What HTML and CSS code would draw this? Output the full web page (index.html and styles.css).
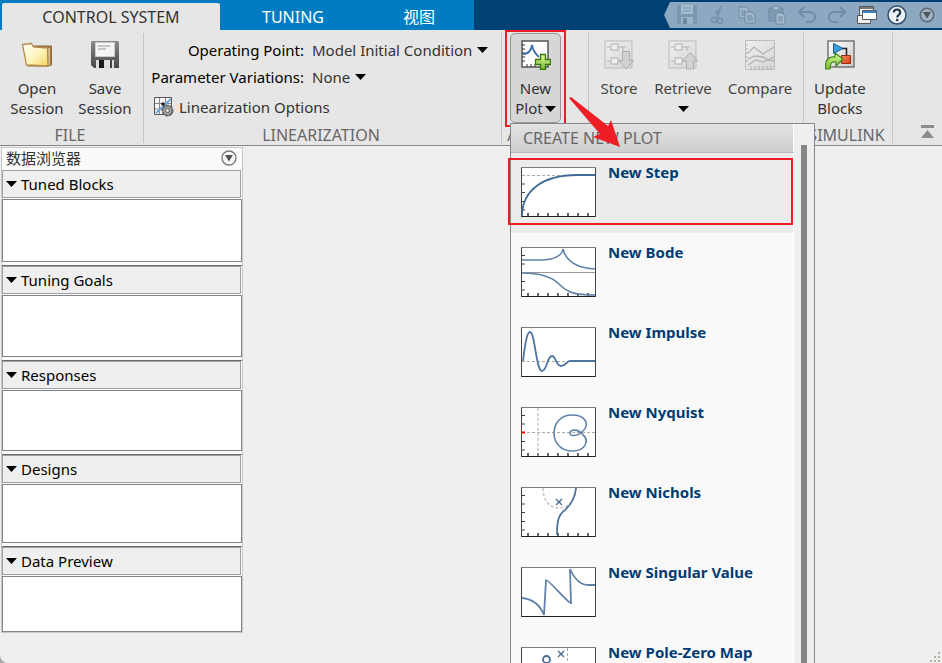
FILE: index.html
```html
<!DOCTYPE html>
<html lang="en">
<head>
<meta charset="utf-8">
<title>Control System Tuner</title>
<link rel="stylesheet" href="styles.css">
</head>
<body>
<svg class="defs" width="0" height="0" aria-hidden="true">
  <defs>
    <linearGradient id="gFolder" x1="0" y1="0" x2="1" y2="1"><stop offset="0" stop-color="#fffef2"/><stop offset=".5" stop-color="#fff6c4"/><stop offset="1" stop-color="#f3d75c"/></linearGradient>
    <linearGradient id="gDisk" x1="0" y1="0" x2="0" y2="1"><stop offset="0" stop-color="#8a8a8a"/><stop offset="1" stop-color="#484848"/></linearGradient>
    <linearGradient id="gGreen" x1="0" y1="0" x2="0" y2="1"><stop offset="0" stop-color="#e0f7a0"/><stop offset="1" stop-color="#78bd30"/></linearGradient>
    <linearGradient id="gBox" x1="0" y1="0" x2="1" y2="1"><stop offset="0" stop-color="#ffffff"/><stop offset="1" stop-color="#c9c9c9"/></linearGradient>
    <linearGradient id="gPale" x1="0" y1="0" x2="1" y2="1"><stop offset="0" stop-color="#efefef"/><stop offset="1" stop-color="#d6d6d6"/></linearGradient>
    <linearGradient id="gRed" x1="0" y1="0" x2="1" y2="1"><stop offset="0" stop-color="#f58a5c"/><stop offset="1" stop-color="#d63d10"/></linearGradient>
    <g id="ticksX"><path d="M7 46v3M17 46v3M27 46v3M37 46v3M47 46v3M57 46v3M67 46v3" stroke="#333" stroke-width="1.500" fill="none"/></g>
    <g id="ticksY"><path d="M1 8.500h3M1 17h3M1 25.500h3M1 34.500h3M1 43h3" stroke="#444" stroke-width="1.200" fill="none"/></g>
    <g id="frame"><rect x=".5" y=".5" width="74" height="49" fill="#fff" stroke="#7d7d7d"/><path d="M0 49.500h75" stroke="#222"/><path d="M.5 1v49M74.500 1v49" stroke="#444"/></g>
    <g id="blocks" fill="none"><rect x="1" y="1" width="27" height="27" fill="url(#gPale)" stroke="#bcbcbc"/><path d="M3 7h3M15 7h7M3 21h3M15 21h7M19 7v4" stroke="#b0b0b0"/><rect x="7" y="4" width="7" height="6" fill="#ededed" stroke="#b0b0b0"/><rect x="7" y="18" width="7" height="6" fill="#ededed" stroke="#b0b0b0"/></g>
    <g id="caret"><path d="M0 0h11L5.500 6z" fill="#000"/></g>
  </defs>
</svg>

<div class="app">
  <header class="titlebar">
    <nav class="tabs">
      <a class="tab active" href="#control">CONTROL SYSTEM</a>
      <a class="tab tuning" href="#tuning">TUNING</a>
      <a class="tab view" href="#view" lang="zh">视图</a>
    </nav>
    <div class="quick">
      <button type="button" aria-label="Save" disabled><svg width="22" height="22" viewBox="0 0 22 22" opacity=".55"><path d="M1 1h20v19H1z" fill="#6f8aa3"/><path d="M5 1h12v9H5z" fill="#b7cbdd"/><path d="M7 4h8M7 7h8" stroke="#6f8aa3"/><path d="M5 13h12v7H5z" fill="#a9bfd2"/><path d="M7 14h4v6H7z" fill="#526f8b"/></svg></button>
      <button type="button" aria-label="Cut" disabled><svg width="14" height="20" viewBox="0 0 14 20" fill="none" stroke="#7590a8" stroke-width="1.500"><path d="M11 1 7 12M6 5l3 9" stroke-width="2"/><circle cx="4" cy="15" r="2.500"/><circle cx="10" cy="16" r="2.500"/></svg></button>
      <button type="button" aria-label="Copy" disabled><svg width="18" height="20" viewBox="0 0 18 20" fill="#9fb8cc" stroke="#7089a2"><path d="M1 2h7l3 3v8H1z"/><path d="M3 6h5M3 8h5M3 10h5"/><path d="M7 7h7l3 3v8H7z"/><path d="M9 11h5M9 13h6M9 15h6"/></svg></button>
      <button type="button" aria-label="Paste" disabled><svg width="18" height="20" viewBox="0 0 18 20" fill="#7f9bb3" stroke="#7089a2"><path d="M1 3h14v13H1z"/><path d="M5 1h6v4H5z" fill="#a5bccf"/><path d="M8 8h6l3 3v8H8z" fill="#a5bccf"/><path d="M10 12h5M10 14h5M10 16h5"/></svg></button>
      <button type="button" aria-label="Undo" disabled><svg width="20" height="18" viewBox="0 0 20 18" fill="none" stroke="#718ca5" stroke-width="2"><path d="M7 1 2 6l5 5M2 6h11a5 5 0 0 1 0 10H9"/></svg></button>
      <button type="button" aria-label="Redo" disabled><svg width="20" height="18" viewBox="0 0 20 18" fill="none" stroke="#718ca5" stroke-width="2"><path d="m13 1 5 5-5 5M18 6H7a5 5 0 0 0 0 10h4"/></svg></button>
      <button type="button" aria-label="Switch windows"><svg width="20" height="20" viewBox="0 0 20 20"><path d="M2.500 1.500h14v10h-14z" fill="#f3f3f3" stroke="#555"/><path d="M3 2h13v2H3z" fill="#777"/><path d="M.5 10.500h13v8H.5z" fill="#eee" stroke="#555"/><path d="M5.500 5.500h14v9h-14z" fill="#fff" stroke="#4d5b68"/><path d="M6 6h13v2H6z" fill="#3f83c4"/></svg></button>
      <button type="button" aria-label="Help"><svg width="20" height="20" viewBox="0 0 20 20"><circle cx="10" cy="10" r="9" fill="#eef2f6" stroke="#34506d" stroke-width="1.500"/><path d="M6.800 7.500c0-4 6.400-4 6.400 0 0 2.400-3 2.400-3 5" fill="none" stroke="#26384b" stroke-width="2.200"/><circle cx="10.200" cy="15" r="1.300" fill="#26384b"/></svg></button>
      <button type="button" aria-label="Toolbar options"><svg width="16" height="16" viewBox="0 0 16 16"><circle cx="8" cy="8" r="6.800" fill="#9db2c4" stroke="#5d6872" stroke-width="1.500"/><path d="M4 5h8l-4 6.500z" fill="#4c545c"/></svg></button>
    </div>
  </header>

  <section class="ribbon">
    <div class="group file">
      <div class="tools">
        <button type="button" class="tool"><span class="pic"><svg width="30" height="26" viewBox="0 0 30 26"><path d="M10 4h19.500v19L26 24H6z" fill="#a87b42" stroke="#8d6a3c"/><path d="M27 6v17" stroke="#d6b98c" stroke-width="2"/><path d="M.5 2.500 9.500 1.500l2 3.500 14 1 .5 18-21.500-1z" fill="url(#gFolder)" stroke="#b58b4c" stroke-width="1.300"/></svg></span>Open<br>Session</button>
        <button type="button" class="tool"><span class="pic"><svg width="28" height="28" viewBox="0 0 28 28"><path d="M1 0h26l1 1v26H3l-3-3V1z" fill="url(#gDisk)"/><path d="M4.500 1.500h19v14h-19z" fill="#f4f4f4" stroke="#ccc"/><path d="M7 5h12M7 8h8" stroke="#999"/><path d="M5 19h18v9H5z" fill="#ddd"/><path d="M8 19h5v8H8z" fill="#1b1b1b"/><path d="M20 19v8" stroke="#444" stroke-width="2"/></svg></span>Save<br>Session</button>
      </div>
      <h2>FILE</h2>
    </div>

    <div class="group linear">
      <div class="fields">
        <label for="op">Operating Point:</label>
        <span class="drop"><select id="op"><option>Model Initial Condition</option></select><svg width="11" height="6"><use href="#caret"/></svg></span>
        <label for="pv">Parameter Variations:</label>
        <span class="drop"><select id="pv"><option>None</option></select><svg width="11" height="6"><use href="#caret"/></svg></span>
        <button type="button" class="options"><svg width="20" height="20" viewBox="0 0 20 20"><path d="M.5.500h17v17H.5z" fill="#f5f5f5" stroke="#555"/><path d="M1 6.500h16M1 12h16M5.500 1v16M11.500 1v16" stroke="#888"/><path d="M2 16 17 2" stroke="#6ba6d8" stroke-width="2"/><circle cx="9" cy="7" r="1.800" fill="#222"/><circle cx="13.500" cy="13.500" r="5" fill="#aaa" stroke="#666" stroke-width="2" stroke-dasharray="3 .6"/><circle cx="13.500" cy="13.500" r="2" fill="#eee" stroke="#555"/></svg>Linearization Options</button>
      </div>
      <h2>LINEARIZATION</h2>
    </div>

    <div class="group analysis">
      <div class="tools">
        <button type="button" class="tool open" aria-expanded="true"><span class="pic"><svg width="30" height="30" viewBox="0 0 30 30"><path d="M1 1h26v26H1z" fill="#fff" stroke="#555" stroke-width="1.500"/><path d="M1 5h3M1 9h3M1 13h3M1 17h3M1 21h3M6 27v-3M10 27v-3M14 27v-3" stroke="#333"/><path d="M2 14c5 0 8-3 9-9 1 7 4 9 7 12" fill="none" stroke="#3e6fa5" stroke-width="1.800"/><path d="M19.500 14.500h5v5h5v5h-5v5h-5v-5h-5v-5h5z" fill="url(#gGreen)" stroke="#34770f" stroke-width="1.300"/></svg></span>New<br>Plot<svg class="inline" width="11" height="6"><use href="#caret"/></svg></button>
      </div>
      <h2>ANALYSIS</h2>

      <div class="menu">
        <h3>CREATE NEW PLOT</h3>
        <div class="scroller">
          <ul>
            <li><a class="selected" href="#step"><svg width="75" height="50" fill="none"><use href="#frame"/><use href="#ticksX"/><use href="#ticksY"/><path d="M1 8.500h73" stroke="#aaa" stroke-dasharray="3 2"/><path d="M1 49C1 25 20 8 56 8h18" stroke="#416b98" stroke-width="1.800"/></svg><span>New Step</span></a></li>
            <li><a href="#bode"><svg width="75" height="50" fill="none"><use href="#frame"/><use href="#ticksX"/><use href="#ticksY"/><path d="M1 25.500h73" stroke="#999"/><path d="M1 13h19c12 0 21-4 22-11 3 12 13 19 32 20M1 26c16 0 29 3 37 11 9 9 16 11 36 11" stroke="#5f82a8" stroke-width="1.600"/></svg><span>New Bode</span></a></li>
            <li><a href="#impulse"><svg width="75" height="50" fill="none"><use href="#frame"/><path d="M1 34.500h73" stroke="#aaa" stroke-dasharray="3 2"/><path d="M2 34C4 17 6 5 9 5c5 0 6 39 12 39 5 0 5-15 10-15 4 0 4 10 9 10s5-5 9-5h25" stroke="#4f769f" stroke-width="1.800"/></svg><span>New Impulse</span></a></li>
            <li><a href="#nyquist"><svg width="75" height="50" fill="none"><use href="#frame"/><use href="#ticksX"/><use href="#ticksY"/><path d="M1 25.500h73M17 1v48" stroke="#aaa" stroke-dasharray="3 2"/><path d="M0 22.500v6M0 25.500h4" stroke="#f00" stroke-width="2"/><path d="M61 27c-2-4-12-6-12-1 0 4 8 3 12-1 9-8 3-17-10-17-11 0-18 8-18 18s7 18 18 18c14 0 18-11 10-17" stroke="#5f82a8" stroke-width="1.600"/></svg><span>New Nyquist</span></a></li>
            <li><a href="#nichols"><svg width="75" height="50" fill="none"><use href="#frame"/><use href="#ticksX"/><use href="#ticksY"/><path d="M22 1c0 14 8 20 16 20 10 0 17-8 17-20" stroke="#bbb" stroke-width="1.300" stroke-dasharray="3 2"/><path d="m35 12 6 6m0-6-6 6" stroke="#45698f" stroke-width="1.300"/><path d="M55 1c-1 10-4 16-11 22-7 5-8 12-8 25" stroke="#4f769f" stroke-width="1.800"/></svg><span>New Nichols</span></a></li>
            <li><a href="#singular"><svg width="75" height="50" fill="none"><use href="#frame"/><path d="M1 31c10 1 18 7 22 17l2-35c2-1 22 23 25 23l-1-34c5 11 11 16 18 16h7" stroke="#5f82a8" stroke-width="1.800"/></svg><span>New Singular Value</span></a></li>
            <li><a href="#polezero"><svg width="75" height="50" fill="none"><use href="#frame"/><path d="M46.500 1v48" stroke="#aaa" stroke-dasharray="3 2"/><circle cx="25.500" cy="12.500" r="3.500" stroke="#45698f" stroke-width="1.800"/><path d="m37 4 6 6m0-6-6 6" stroke="#45698f" stroke-width="1.300"/></svg><span>New Pole-Zero Map</span></a></li>
          </ul>
        </div>
        <div class="track"><div class="thumb"></div></div>
      </div>
      <svg class="arrow" width="52" height="52" viewBox="0 0 52 52" aria-hidden="true"><path d="M0 1 2 0 39 29l3-6 9 27-27-10 7-3z" fill="#ee1c25"/></svg>
    </div>

    <div class="group results">
      <div class="tools">
        <button type="button" class="tool store" disabled><span class="pic"><svg width="30" height="30" viewBox="0 0 30 30"><use href="#blocks"/><path d="M18.500 11.500h7v9h4l-7.500 8.500-7.500-8.500h4z" fill="#d2d2d2" stroke="#adadad"/></svg></span>Store</button>
        <button type="button" class="tool retrieve" disabled><span class="pic"><svg width="30" height="30" viewBox="0 0 30 30"><use href="#blocks"/><path d="M18.500 29v-8h-4L22 12.500l7.500 8.500h-4v8z" fill="#d2d2d2" stroke="#adadad"/></svg></span>Retrieve<br><svg class="inline" width="11" height="6"><use href="#caret"/></svg></button>
        <button type="button" class="tool compare" disabled><span class="pic"><svg width="30" height="30" viewBox="0 0 30 30" fill="none"><path d="M.5.500h29v29H.5z" fill="url(#gPale)" stroke="#bcbcbc"/><path d="M1 5h2M1 9h2M1 13h2M1 17h2M1 21h2M6 29v-3M10 29v-3M14 29v-3M18 29v-3M22 29v-3M26 29v-3" stroke="#aaa"/><path d="m3 13 6-6 9 7L29 7M3 19l7-3 8 1 5 3 6 1M3 25l8-5 7 2 11-5" stroke="#b2b2b2" stroke-width="1.300"/></svg></span>Compare</button>
      </div>
    </div>

    <div class="group simulink">
      <div class="tools">
        <button type="button" class="tool"><span class="pic"><svg width="30" height="30" viewBox="0 0 30 30"><path d="M3 1h26v26H3z" fill="url(#gBox)" stroke="#777" stroke-width="1.500"/><path d="M17 8.500h4.500V16" fill="none" stroke="#222" stroke-width="1.500"/><path d="M8.500 3.500 18 8.500l-9.500 5z" fill="#36a0de" stroke="#145e94"/><path d="M16.500 15.500h9v8h-9z" fill="url(#gRed)" stroke="#8f2c0d"/><path d="M.7 29C-.5 20 4 16 10 17v-4l8 6-7 7v-4c-5-1-6 2-6 7z" fill="url(#gGreen)" stroke="#3d8417" stroke-width="1.200"/></svg></span>Update<br>Blocks</button>
      </div>
      <h2>SIMULINK</h2>
    </div>
    <button type="button" class="collapse" aria-label="Collapse toolstrip"><svg width="13" height="13"><path d="M0 1.500h13" stroke="#8c8c8c" stroke-width="3"/><path d="M0 13 6.500 5 13 13z" fill="#8c8c8c"/></svg></button>
  </section>

  <main class="workspace">
    <aside class="browser">
      <div class="browser-title"><span lang="zh">数据浏览器</span><button type="button" aria-label="Browser options"><svg width="16" height="16" viewBox="0 0 16 16"><circle cx="8" cy="8" r="7" fill="#fafafa" stroke="#777" stroke-width="1.300"/><path d="M4 5h8l-4 6.500z" fill="#555"/></svg></button></div>
      <section class="panel"><button type="button"><svg width="11" height="6"><use href="#caret"/></svg>Tuned Blocks</button><div class="box tall"></div></section>
      <section class="panel"><button type="button"><svg width="11" height="6"><use href="#caret"/></svg>Tuning Goals</button><div class="box"></div></section>
      <section class="panel"><button type="button"><svg width="11" height="6"><use href="#caret"/></svg>Responses</button><div class="box medium"></div></section>
      <section class="panel"><button type="button"><svg width="11" height="6"><use href="#caret"/></svg>Designs</button><div class="box short"></div></section>
      <section class="panel"><button type="button"><svg width="11" height="6"><use href="#caret"/></svg>Data Preview</button><div class="box last"></div></section>
    </aside>
  </main>
  <svg class="grip" width="12" height="12" aria-hidden="true"><path d="M8 1h2v2H8zM4 5h2v2H4zM8 5h2v2H8zM0 9h2v2H0zM4 9h2v2H4zM8 9h2v2H8z" fill="#b3b09c"/></svg>
</div>
</body>
</html>
```
FILE: styles.css
```css
* { box-sizing: border-box; }
html { background: #a8a8a8; }
body {
  margin: 0;
  font: 15px/20px "Noto Sans", "Noto Sans CJK SC", sans-serif;
  color: #333;
}
.defs { position: absolute; }
button, select {
  font: inherit;
  color: inherit;
  background: none;
  border: 0;
  padding: 0;
  margin: 0;
}
a { color: inherit; text-decoration: none; }
svg { display: block; flex: none; }
h2, h3 { margin: 0; font-size: 16px; font-weight: 400; color: #666; }

.app {
  position: relative;
  display: flex;
  flex-direction: column;
  height: 100vh;
  overflow: hidden;
  background: #efefef;
  border-bottom-left-radius: 8px;
}

/* Title bar */
.titlebar {
  display: flex;
  justify-content: space-between;
  height: 30px;
  background: #004073;
}
.tabs { display: flex; padding: 3px 0 0 2px; background: #007cc2; font-size: 16px; }
.tab { line-height: 28px; text-align: center; color: #fff; width: 146px; }
.tab.active { width: 218px; background: #e6e6e6; color: #333; border-radius: 2px 2px 0 0; }
.tab.view { width: 106px; }
.tabs { padding-right: 2px; }
.quick {
  display: flex;
  margin: 2px 0;
  padding-left: 8px;
  background: #8ca9c1;
  clip-path: polygon(6px 0, 100% 0, 100% 100%, 6px 100%, 0 50%);
}
.quick button { width: 30px; display: grid; place-items: center; }

/* Ribbon */
.ribbon {
  display: flex;
  height: 116px;
  padding-top: 3px;
  background: #e6e6e6;
  border-bottom: 1px solid #87878c;
}
.group {
  position: relative;
  display: flex;
  flex-direction: column;
  height: 112px;
}
.group::after {
  content: "";
  position: absolute;
  right: 0;
  top: 0;
  width: 1px;
  height: 110px;
  background: #c6c6c6;
}
.group h2 { margin-top: 2px; padding-right: 4px; text-align: center; }
.tools { display: flex; align-items: flex-start; height: 90px; }
.tool {
  display: block;
  padding: 7px 0 4px;
  text-align: center;
}
.pic { display: grid; place-items: center; height: 30px; margin-bottom: 8px; }
.inline { display: inline-block; vertical-align: 2px; margin-left: 2px; }
.file { width: 144px; }
.file .tools { padding-left: 3px; }
.file .tool { width: 68px; }
.linear { width: 358px; }
.fields {
  display: grid;
  grid-template-columns: 155px 1fr;
  grid-template-rows: 27px 27px 33px;
  column-gap: 8px;
  align-items: center;
  height: 90px;
  padding: 3px 0 0 5px;
}
.fields label { color: #000; text-align: right; white-space: nowrap; }
.drop { display: flex; align-items: center; gap: 5px; }
.drop select { appearance: none; field-sizing: content; }
.options {
  grid-column: 1 / 3;
  justify-self: start;
  display: flex;
  align-items: center;
  gap: 5px;
  padding-left: 5px;
}
.analysis { width: 87px; }
.analysis .tools { padding-left: 8px; }
.tool.open {
  position: relative;
  width: 51px;
  height: 90px;
  padding: 6px 0 4px;
  background: #d6d6d6;
  border: 1px solid #969696;
  border-radius: 5px;
}
.tool.open::after {
  content: "";
  position: absolute;
  inset: -4px -6px -5px;
  border: 2px solid #ee1c25;
}
.results { width: 215px; }
.results .tools { padding-left: 10px; gap: 14px; }
.results .inline { margin-left: 0; }
.store { width: 40px; }
.retrieve { width: 60px; }
.compare { width: 66px; }
.tool:disabled { color: #444; }
.simulink { width: 89px; }
.simulink .tools { padding-left: 10px; }
.collapse { margin: auto 8px 7px auto; }

/* Plot gallery */
.menu {
  position: absolute;
  z-index: 2;
  top: 90px;
  left: 8px;
  width: 305px;
  height: calc(100vh - 123px);
  display: grid;
  grid-template-columns: 1fr 20px;
  grid-template-rows: 29px 1fr;
  background: #efefef;
  border: 1px solid #85858f;
  border-bottom: 0;
}
.menu h3 {
  padding-left: 12px;
  line-height: 29px;
  height: 29px;
  background: linear-gradient(#e2e2e2, #cfcfcf);
  border-bottom: 1px solid #b8b8b8;
  border-right: 1px solid #fff;
}
.scroller {
  min-height: 0;
  overflow: clip;
  overflow-clip-margin: 4px;
  background: #f9f9f9;
  border-right: 1px solid #fff;
}
.menu ul { list-style: none; margin: 0; padding: 0; }
.menu li a {
  position: relative;
  display: flex;
  gap: 12px;
  height: 80px;
  padding: 14px 0 0 10px;
  color: #003c73;
  font-weight: 700;
}
.menu li span { margin-top: -5px; }
.menu a.selected { background: #ececec; }
.menu a.selected::after {
  content: "";
  position: absolute;
  inset: 5px 0 8px -3px;
  border: 2px solid #ee1c25;
}
.track { grid-column: 2; grid-row: 1 / 3; padding: 21px 0 0 7px; }
.thumb { width: 6px; height: 100%; background: #868686; }
.arrow { position: absolute; z-index: 3; left: 67px; top: 64px; }

/* Data browser */
.workspace { flex: 1; display: flex; padding: 1px; }
.browser {
  width: 242px;
  align-self: flex-start;
  border: 1px solid #c8c8c8;
  background: #fafafa;
}
.browser-title {
  display: flex;
  align-items: center;
  justify-content: space-between;
  height: 22px;
  padding: 0 5px 2px 4px;
}
.panel + .panel { margin-top: 3px; border-top: 1px solid #6c6c6c; }
.panel button {
  display: flex;
  align-items: center;
  gap: 4px;
  width: calc(100% - 1px);
  height: 28px;
  margin-bottom: 1px;
  padding-left: 3px;
  color: #000;
  background: #efefef;
  border: 1px solid #a0a0a0;
}
.box { height: 62px; background: #fff; border: 1px solid #80858d; }
.box.tall { height: 63px; }
.box.medium { height: 61px; }
.box.short { height: 59px; }
.box.last { height: 56px; }
.grip { position: absolute; right: 0; bottom: 0; }
```
